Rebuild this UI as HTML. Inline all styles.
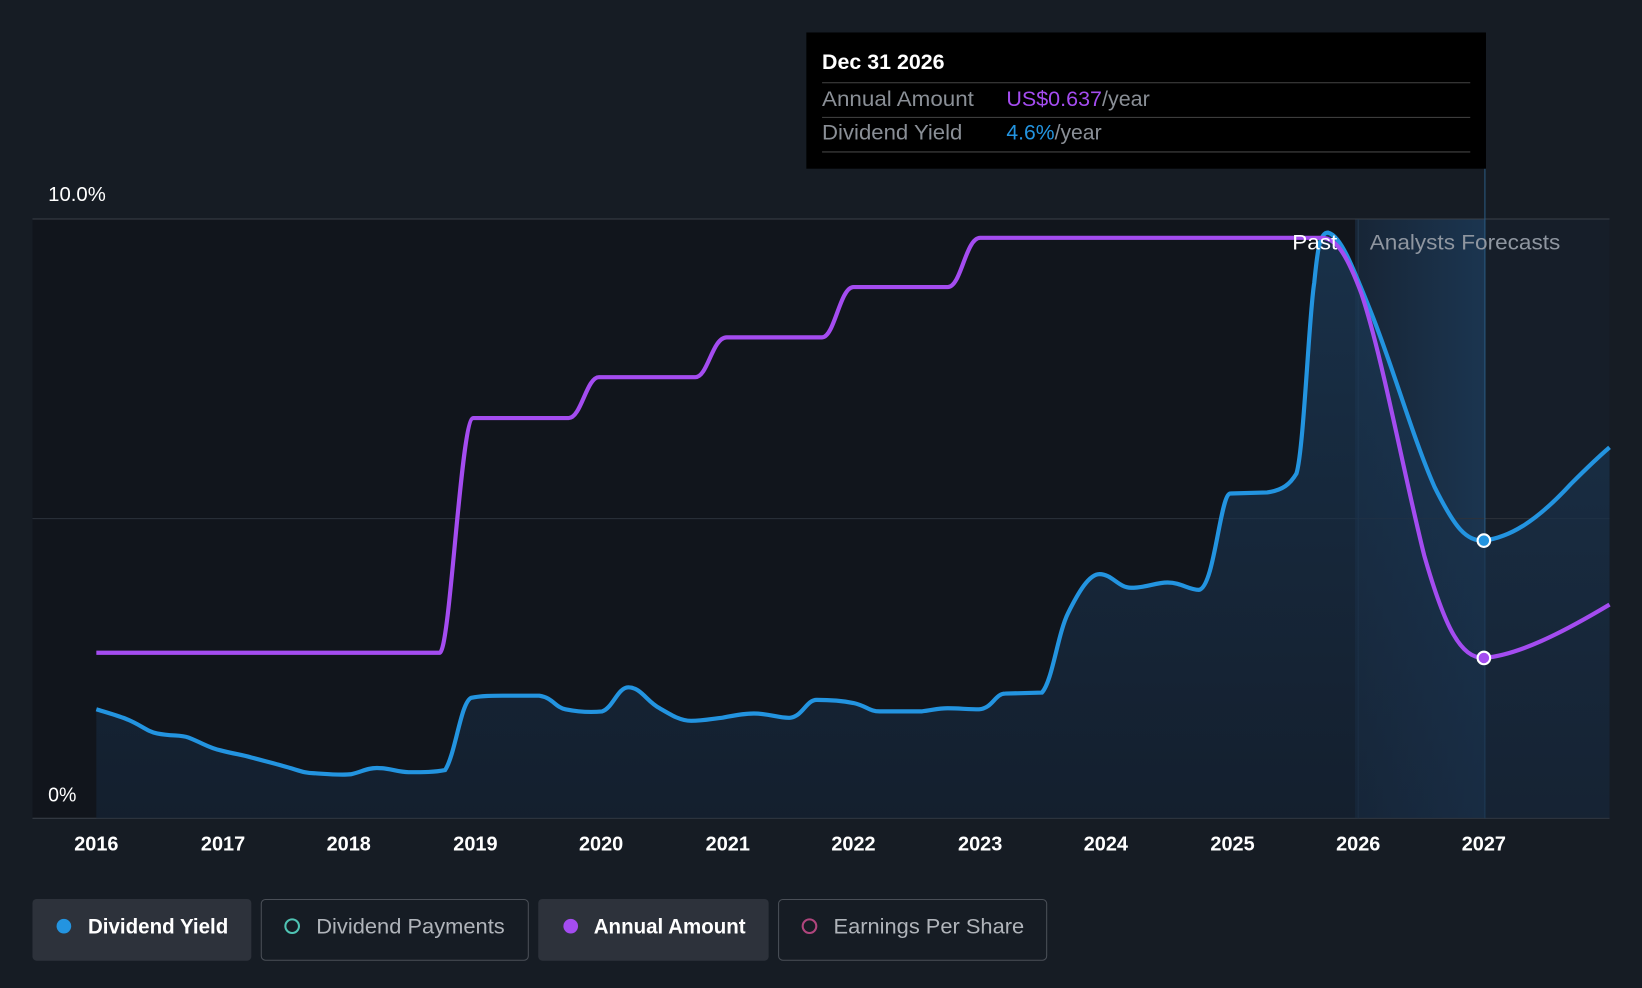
<!DOCTYPE html>
<html><head><meta charset="utf-8"><style>
html,body{margin:0;padding:0;background:#161c24;}
svg{display:block}
text{font-family:"Liberation Sans",sans-serif}
</style></head><body>
<svg width="1642" height="988" viewBox="0 0 1568 943" preserveAspectRatio="none" xmlns="http://www.w3.org/2000/svg">
<defs>
<linearGradient id="fc" x1="0" x2="1" y1="0" y2="0"><stop offset="0" stop-color="#172536"/><stop offset="1" stop-color="#1b3550"/></linearGradient>
<linearGradient id="bf" x1="0" x2="0" y1="0" y2="1"><stop offset="0" stop-color="#1b3a58" stop-opacity="0.75"/><stop offset="1" stop-color="#16263a" stop-opacity="0.6"/></linearGradient>
</defs>
<rect width="1568" height="943" fill="#161c24"/>
<rect x="31" y="209" width="1263" height="572" fill="#11151c"/>
<rect x="1294" y="209" width="124" height="572" fill="url(#fc)"/>
<rect x="1418" y="209" width="119" height="572" fill="#161e29"/>
<line x1="31" y1="209" x2="1537" y2="209" stroke="#3a4049" stroke-width="1"/>
<line x1="31" y1="495" x2="1537" y2="495" stroke="#2c323b" stroke-width="1"/>
<line x1="31" y1="781" x2="1537" y2="781" stroke="#3a4049" stroke-width="1"/>
<line x1="1297" y1="209" x2="1297" y2="781" stroke="#24384d" stroke-width="1"/>
<line x1="1418" y1="161" x2="1418" y2="781" stroke="#2a5a80" stroke-width="1"/>
<path d="M92,677 C105,681 112,683 120,686 C135,692 140,698 150,700 C165,703 172,701 180,704 C195,710 200,714 210,716 C225,720 230,720 240,723 C255,727 260,728 270,731 C285,735 290,738 300,738 C315,739 325,740 335,739 C345,737 350,733 360,733 C372,733 380,737 390,737 C405,737 415,737 425,735 C435,720 440,670 450,666 C460,664 470,664 480,664 L515,664 C528,666 530,675 540,677 C555,680 565,680 575,679 C585,676 590,656 600,656 C612,656 618,670 630,676 C642,683 650,688 660,688 C672,688 680,686 690,685 C700,683 710,681 720,681 C735,681 745,686 755,685 C767,683 770,668 780,668 C795,668 805,669 815,671 C828,674 830,679 840,679 L880,679 C890,678 895,676 905,676 C915,676 925,677 935,677 C948,676 950,662 960,662 L995,661 C1005,650 1010,605 1020,585 C1030,565 1040,548 1050,548 C1062,548 1068,561 1080,561 C1095,561 1103,556 1115,556 C1128,556 1135,563 1145,563 C1160,560 1165,471 1175,471 L1210,470 C1225,468 1232,462 1238,452 C1245,430 1250,300 1255,270 C1258,240 1260,222 1268,222 C1280,225 1290,250 1310,300 C1330,350 1350,420 1370,465 C1390,505 1400,516 1417,516 C1440,513 1465,500 1500,462 C1515,447 1530,433 1537,427 L1537,781 L92,781 Z" fill="url(#bf)"/>
<path d="M92,677 C105,681 112,683 120,686 C135,692 140,698 150,700 C165,703 172,701 180,704 C195,710 200,714 210,716 C225,720 230,720 240,723 C255,727 260,728 270,731 C285,735 290,738 300,738 C315,739 325,740 335,739 C345,737 350,733 360,733 C372,733 380,737 390,737 C405,737 415,737 425,735 C435,720 440,670 450,666 C460,664 470,664 480,664 L515,664 C528,666 530,675 540,677 C555,680 565,680 575,679 C585,676 590,656 600,656 C612,656 618,670 630,676 C642,683 650,688 660,688 C672,688 680,686 690,685 C700,683 710,681 720,681 C735,681 745,686 755,685 C767,683 770,668 780,668 C795,668 805,669 815,671 C828,674 830,679 840,679 L880,679 C890,678 895,676 905,676 C915,676 925,677 935,677 C948,676 950,662 960,662 L995,661 C1005,650 1010,605 1020,585 C1030,565 1040,548 1050,548 C1062,548 1068,561 1080,561 C1095,561 1103,556 1115,556 C1128,556 1135,563 1145,563 C1160,560 1165,471 1175,471 L1210,470 C1225,468 1232,462 1238,452 C1245,430 1250,300 1255,270 C1258,240 1260,222 1268,222 C1280,225 1290,250 1310,300 C1330,350 1350,420 1370,465 C1390,505 1400,516 1417,516 C1440,513 1465,500 1500,462 C1515,447 1530,433 1537,427" fill="none" stroke="#2394e0" stroke-width="4"/>
<path d="M92,623 L420,623 C430,620 440,399 452,399 L543,399 C555,399 560,360 572,360 L664,360 C676,360 680,322 694,322 L785,322 C797,322 802,274 815,274 L905,274 C918,274 922,227 936,227 L1262,227 C1275,227 1285,240 1300,280 C1320,340 1340,450 1360,530 C1380,600 1395,628 1417,628 C1450,625 1490,605 1537,577" fill="none" stroke="#a44cf0" stroke-width="4"/>
<circle cx="1417" cy="516" r="6" fill="#2394e0" stroke="#fff" stroke-width="2"/>
<circle cx="1417" cy="628" r="6" fill="#a44cf0" stroke="#fff" stroke-width="2"/>
<text x="46" y="192" fill="#fff" font-size="19" textLength="55" lengthAdjust="spacingAndGlyphs">10.0%</text>
<text x="46" y="765" fill="#fff" font-size="19" textLength="27" lengthAdjust="spacingAndGlyphs">0%</text>
<text x="1234" y="238" fill="#fff" font-size="20" textLength="43" lengthAdjust="spacingAndGlyphs">Past</text>
<text x="1308" y="238" fill="#8f96a0" font-size="20" textLength="182" lengthAdjust="spacingAndGlyphs">Analysts Forecasts</text>
<g fill="#fff" font-size="19" font-weight="600" text-anchor="middle">
<text x="92" y="812">2016</text><text x="213" y="812">2017</text><text x="333" y="812">2018</text><text x="454" y="812">2019</text><text x="574" y="812">2020</text><text x="695" y="812">2021</text><text x="815" y="812">2022</text><text x="936" y="812">2023</text><text x="1056" y="812">2024</text><text x="1177" y="812">2025</text><text x="1297" y="812">2026</text><text x="1417" y="812">2027</text>
</g>
<rect x="770" y="31" width="649" height="130" fill="#000"/>
<text x="785" y="66" fill="#fff" font-size="20" font-weight="600" textLength="117" lengthAdjust="spacingAndGlyphs">Dec 31 2026</text>
<line x1="785" y1="79" x2="1404" y2="79" stroke="#444" stroke-width="1"/>
<text x="785" y="101" fill="#8a8f96" font-size="20" textLength="145" lengthAdjust="spacingAndGlyphs">Annual Amount</text>
<text x="961" y="101" font-size="20" textLength="137" lengthAdjust="spacingAndGlyphs"><tspan fill="#a44cf0">US$0.637</tspan><tspan fill="#8a8f96">/year</tspan></text>
<line x1="785" y1="112" x2="1404" y2="112" stroke="#444" stroke-width="1"/>
<text x="785" y="133" fill="#8a8f96" font-size="20" textLength="134" lengthAdjust="spacingAndGlyphs">Dividend Yield</text>
<text x="961" y="133" font-size="20" textLength="91" lengthAdjust="spacingAndGlyphs"><tspan fill="#2394e0">4.6%</tspan><tspan fill="#8a8f96">/year</tspan></text>
<line x1="785" y1="145" x2="1404" y2="145" stroke="#444" stroke-width="1"/>
<rect x="31" y="858" width="209" height="59" rx="4" fill="#2d323b"/>
<circle cx="61" cy="884" r="7" fill="#2394e0"/>
<text x="84" y="891" fill="#fff" font-size="20" font-weight="600" textLength="134" lengthAdjust="spacingAndGlyphs">Dividend Yield</text>
<rect x="249.5" y="858.5" width="255" height="58" rx="4" fill="none" stroke="#4a4f57"/>
<circle cx="279" cy="884" r="6.5" fill="none" stroke="#4fc3b3" stroke-width="2"/>
<text x="302" y="891" fill="#b0b4ba" font-size="20" textLength="180" lengthAdjust="spacingAndGlyphs">Dividend Payments</text>
<rect x="514" y="858" width="220" height="59" rx="4" fill="#2d323b"/>
<circle cx="545" cy="884" r="7" fill="#a44cf0"/>
<text x="567" y="891" fill="#fff" font-size="20" font-weight="600" textLength="145" lengthAdjust="spacingAndGlyphs">Annual Amount</text>
<rect x="743.5" y="858.5" width="256" height="58" rx="4" fill="none" stroke="#4a4f57"/>
<circle cx="773" cy="884" r="6.5" fill="none" stroke="#b0457d" stroke-width="2"/>
<text x="796" y="891" fill="#b0b4ba" font-size="20" textLength="182" lengthAdjust="spacingAndGlyphs">Earnings Per Share</text>
</svg>
</body></html>
